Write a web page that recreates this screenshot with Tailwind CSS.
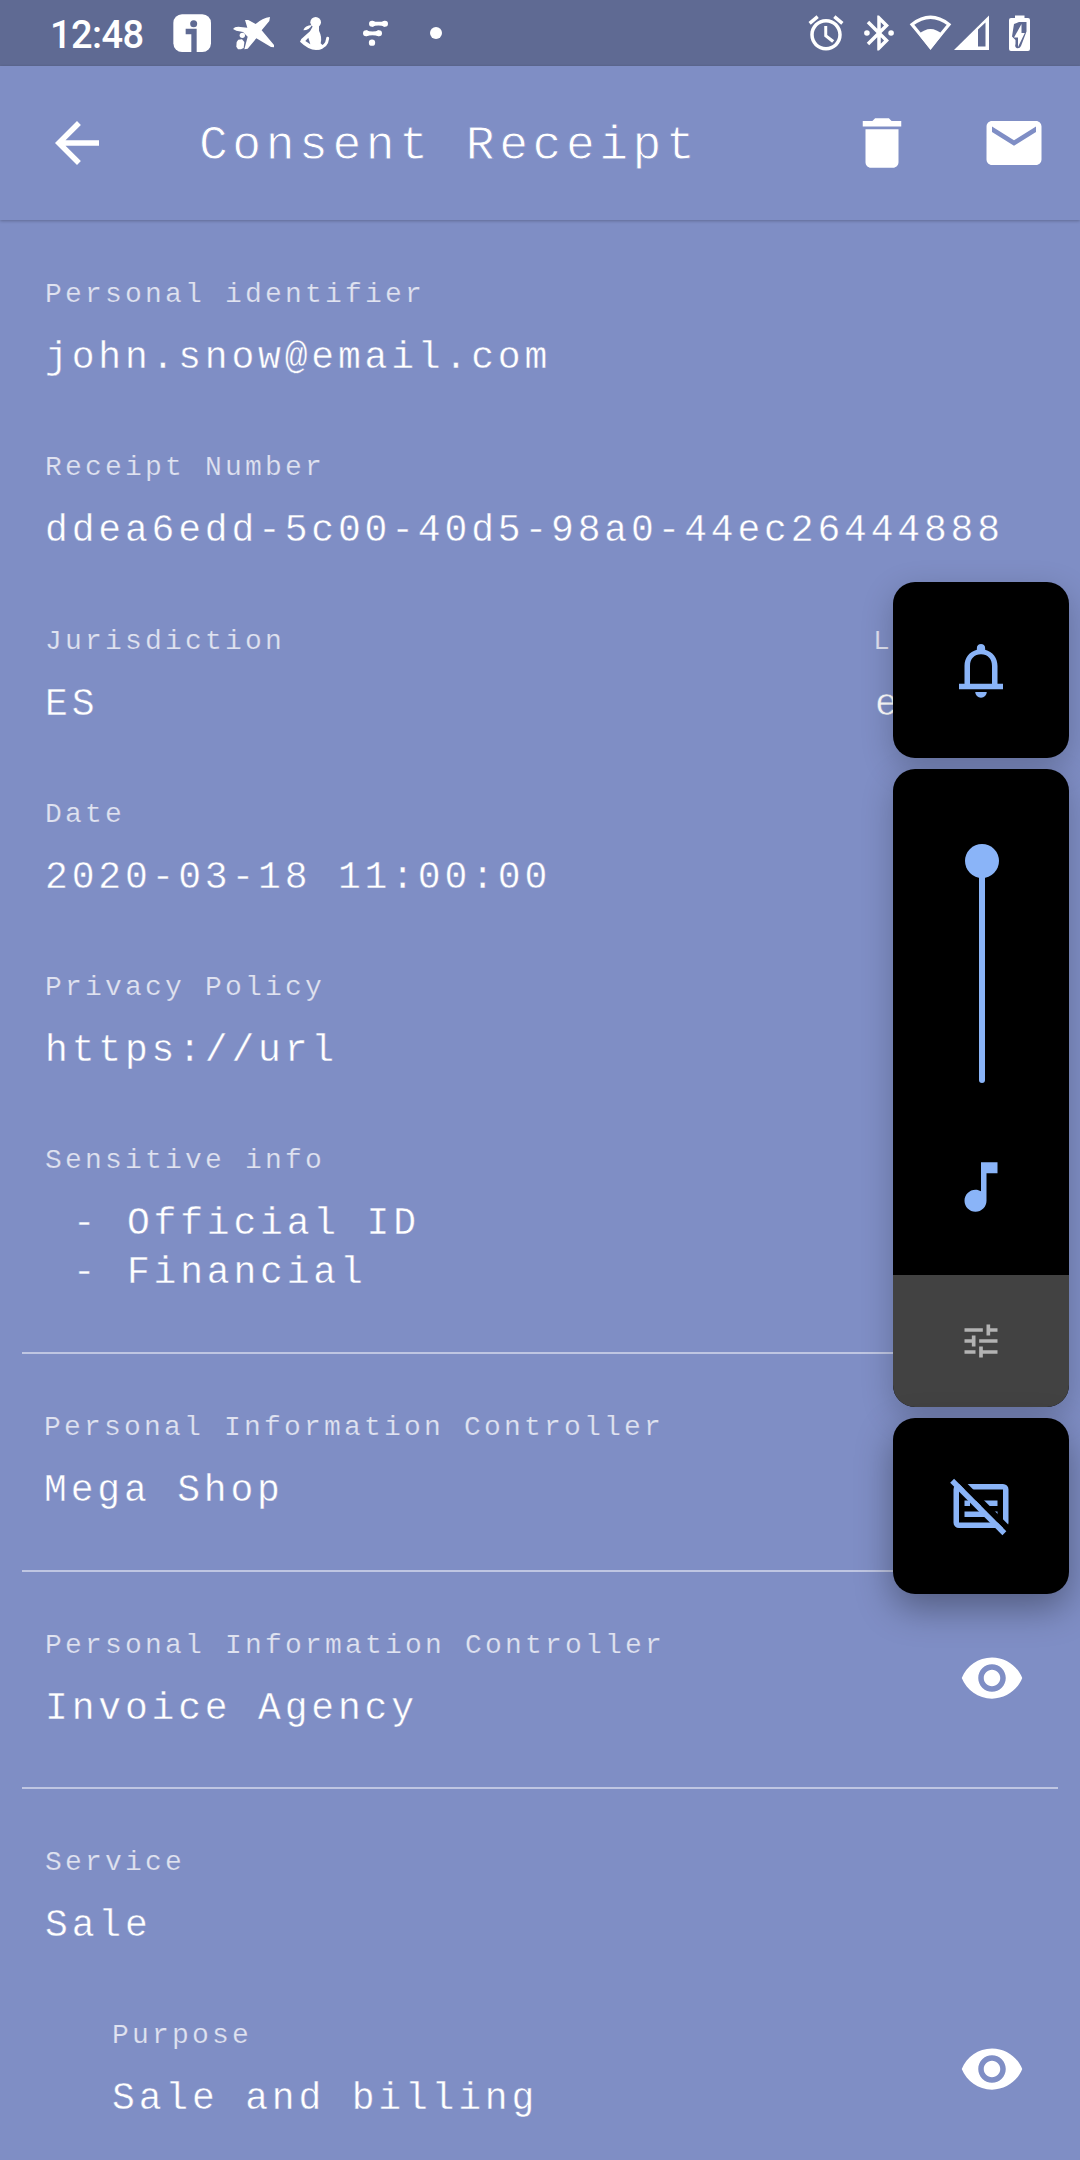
<!DOCTYPE html>
<html lang="en">
<head>
<meta charset="utf-8">
<title>Consent Receipt</title>
<script src="https://cdn.jsdelivr.net/npm/@tailwindcss/browser@4"></script>
</head>
<body class="bg-[#7f8ec5]">
<div class="relative flex h-[2160px] w-[1080px] flex-col overflow-hidden bg-[#7f8ec5] text-white [font-family:'Liberation_Mono',monospace]">

  <!-- Status bar -->
  <div class="flex h-[66px] shrink-0 items-center justify-between bg-[#5f6a93]">
    <div class="flex items-center">
      <span class="w-[172px] pl-[50px] pt-[3px] text-[38px] leading-none font-medium tracking-[-0.6px] [font-family:Roboto,sans-serif]">12:48</span>
      <svg class="h-[66px] w-[50px]" viewBox="36 0 150 198"><rect x="40" y="43" width="113" height="113" rx="26" fill="#fff"/><g fill="#5f6a93"><circle cx="101" cy="71" r="10.5"/><path d="M77 86h33v71H94v-54H77z"/></g></svg>
      <svg class="h-[66px] w-[65px]" viewBox="186 0 195 198" fill="#fff"><path d="M255 60h10l22 12q20-18 43-21l-2 12-23 28 37 44v7l-9-1-44-26-26 31-10 2 10-38-14-14-20-4-10-5 6-5 10-2 27 3z"/><circle cx="247" cy="106" r="8"/><path d="M235 119l11-1 7 8-2 18-8 4h-9l-5-8 1-14z"/></svg>
      <svg class="h-[66px] w-[60px]" viewBox="381 0 180 198"><g fill="#fff"><circle cx="467" cy="67" r="16"/><path d="M430 91q5-15 26-16-8 16-26 16z"/><path d="M459 78h18v14q10 20 5 38l8 8q0 12-22 12-22 0-48-25l4-8 26-23z"/></g><path d="M445 113l-9 10 15 10z" fill="#5f6a93"/><path d="M474 144q26-2 29-29" fill="none" stroke="#fff" stroke-width="9" stroke-linecap="round"/></svg>
      <svg class="h-[66px] w-[60px]" viewBox="561 0 180 198" fill="#fff"><circle cx="636" cy="71" r="9"/><circle cx="675" cy="71" r="9"/><path d="M636 62q20 7 39 0v18q-20-7-39 0z"/><circle cx="618" cy="100" r="9"/><circle cx="657" cy="100" r="9"/><path d="M618 91q20 7 39 0v18q-20-7-39 0z"/><circle cx="636" cy="128" r="9.5"/></svg>
      <svg class="h-[66px] w-[53px]" viewBox="741 0 159 198" fill="#fff"><circle cx="828" cy="99" r="18"/></svg>
    </div>
    <div class="flex items-center pr-[36px]">
      <svg class="mr-[11px] size-[42px]" viewBox="0 0 24 24" fill="#fff"><path d="M22 5.720l-4.600-3.860-1.290 1.530 4.600 3.860L22 5.720zM7.880 3.390L6.600 1.860 2 5.710l1.290 1.530 4.590-3.850zM12.700 8H11v6l4.500 3.600 1.200-1.400-4-3V8zM12 4c-4.970 0-9 4.030-9 9s4.020 9 9 9c4.970 0 9-4.030 9-9s-4.030-9-9-9zm0 16c-3.870 0-7-3.130-7-7s3.130-7 7-7 7 3.130 7 7-3.130 7-7 7z"/></svg>
      <svg class="mr-[6px] size-[42px]" viewBox="0 0 24 24" fill="#fff"><circle cx="5.100" cy="12" r="1.600"/><circle cx="18.900" cy="12" r="1.600"/><path d="M17.710 7.710L12 2h-1v7.590L6.410 5 5 6.410 10.590 12 5 17.590 6.410 19 11 14.410V22h1l5.710-5.710-4.300-4.290 4.300-4.290zM13 5.830l1.880 1.880L13 9.590V5.830zm1.880 10.460L13 18.170v-3.760l1.880 1.880z"/></svg>
      <svg class="h-[66px] w-[138px]" viewBox="906 0 138 66">
        <path d="M912 24.500q18.500-14.500 37 0L930.500 47z" fill="none" stroke="#fff" stroke-width="3.200"/>
        <path d="M930.500 50L918.500 34.500q12-11 24 0z" fill="#fff"/>
        <path d="M954 50L989 15.500V50z" fill="#fff"/><path d="M978 29.500l7.500-7V46.500H978z" fill="#5f6a93"/>
        <path d="M1015 15.500h9.500V18h3.500q2 0 2 2v29q0 2-2 2h-17q-2 0-2-2V20q0-2 2-2h4z" fill="#fff"/>
        <path d="M1019 22h7.500v9.500l-5.500 14.500q-1.500 3-4.500 2-2-1-1-4v-4l-3.500-3.500 2-12.500z" fill="#5f6a93"/>
        <path d="M1021.500 24l-7.500 13.500h4v9.500l6.800-14h-3.300z" fill="#fff"/>
      </svg>
    </div>
  </div>

  <!-- App bar -->
  <header class="z-10 flex h-[154px] shrink-0 items-center bg-[#7f8ec5] pr-[33px] pl-[44px] shadow-[0_1px_3px_rgba(0,0,0,0.25)]">
    <svg class="size-[66px]" viewBox="0 0 24 24" fill="#fff"><path d="M20 11H7.830l5.590-5.590L12 4l-8 8 8 8 1.410-1.410L7.830 13H20v-2z"/></svg>
    <h1 class="ml-[89px] flex-1 pt-[6px] text-[48px] leading-none tracking-[4.550px] whitespace-nowrap [-webkit-text-stroke:0.800px_#7f8ec5]">Consent Receipt</h1>
    <svg class="size-[66px]" viewBox="0 0 24 24" fill="#fff"><path d="M6 19c0 1.100.9 2 2 2h8c1.100 0 2-.9 2-2V7H6v12zM19 4h-3.500l-1-1h-5l-1 1H5v2h14V4z"/></svg>
    <svg class="ml-[66px] size-[66px]" viewBox="0 0 24 24" fill="#fff"><path d="M20 4H4c-1.100 0-1.990.9-1.990 2L2 18c0 1.100.9 2 2 2h16c1.100 0 2-.9 2-2V6c0-1.100-.9-2-2-2zm0 4l-8 5-8-5V6l8 5 8-5v2z"/></svg>
  </header>

  <!-- Receipt -->
  <main class="px-[22px] text-[38px] leading-[49px] tracking-[3.830px] [-webkit-text-stroke:0.400px_#7f8ec5]">
    <section class="border-b-2 border-[#bfc6e2] pt-[57px] pb-[55px] pl-[23px]">
      <div class="h-[173.300px]"><p class="mb-5 text-[28px] leading-[36px] tracking-[3.200px] text-white/75 [-webkit-text-stroke:0.200px_#7f8ec5]">Personal identifier</p><p>john.snow@email.com</p></div>
      <div class="h-[173.300px]"><p class="mb-5 text-[28px] leading-[36px] tracking-[3.200px] text-white/75 [-webkit-text-stroke:0.200px_#7f8ec5]">Receipt Number</p><p class="whitespace-nowrap">ddea6edd-5c00-40d5-98a0-44ec26444888</p></div>
      <div class="flex h-[173.300px]">
        <div class="w-[828px] shrink-0"><p class="mb-5 text-[28px] leading-[36px] tracking-[3.200px] text-white/75 [-webkit-text-stroke:0.200px_#7f8ec5]">Jurisdiction</p><p>ES</p></div>
        <div><p class="mb-5 text-[28px] leading-[36px] tracking-[3.200px] text-white/75 [-webkit-text-stroke:0.200px_#7f8ec5]">Language</p><p class="pl-[2px]">en</p></div>
      </div>
      <div class="h-[173.300px]"><p class="mb-5 text-[28px] leading-[36px] tracking-[3.200px] text-white/75 [-webkit-text-stroke:0.200px_#7f8ec5]">Date</p><p>2020-03-18 11:00:00</p></div>
      <div class="h-[173.300px]"><p class="mb-5 text-[28px] leading-[36px] tracking-[3.200px] text-white/75 [-webkit-text-stroke:0.200px_#7f8ec5]">Privacy Policy</p><p>https://url</p></div>
      <div><p class="mb-5 text-[28px] leading-[36px] tracking-[3.200px] text-white/75 [-webkit-text-stroke:0.200px_#7f8ec5]">Sensitive info</p><p class="pl-[1px] whitespace-pre"> - <span class="ml-[1px]">Official ID</span></p><p class="pl-[1px] whitespace-pre"> - <span class="ml-[1px]">Financial</span></p></div>
    </section>
    <section class="border-b-2 border-[#bfc6e2] pt-14 pb-[54.500px] pl-[22px]">
      <p class="mb-5 text-[28px] leading-[36px] tracking-[3.200px] text-white/75 [-webkit-text-stroke:0.200px_#7f8ec5]">Personal Information Controller</p><p>Mega Shop</p>
    </section>
    <section class="flex items-center justify-between border-b-2 border-[#bfc6e2] pt-14 pr-[33px] pb-[54.500px] pl-[23px]">
      <div><p class="mb-5 text-[28px] leading-[36px] tracking-[3.200px] text-white/75 [-webkit-text-stroke:0.200px_#7f8ec5]">Personal Information Controller</p><p>Invoice Agency</p></div>
      <svg class="-mt-5 -mb-4 size-[66px]" viewBox="0 0 24 24" fill="#fff" stroke="none"><path d="M12 4.500C7 4.500 2.730 7.610 1 12c1.730 4.390 6 7.500 11 7.500s9.270-3.110 11-7.500c-1.730-4.390-6-7.500-11-7.500zM12 17c-2.760 0-5-2.240-5-5s2.240-5 5-5 5 2.240 5 5-2.240 5-5 5zm0-8c-1.660 0-3 1.340-3 3s1.340 3 3 3 3-1.340 3-3-1.340-3-3-3z"/></svg>
    </section>
    <section class="pt-14 pl-[23px]">
      <div class="h-[173px]"><p class="mb-5 text-[28px] leading-[36px] tracking-[3.200px] text-white/75 [-webkit-text-stroke:0.200px_#7f8ec5]">Service</p><p>Sale</p></div>
      <div class="flex items-center justify-between pr-[33px] pl-[67px]">
        <div><p class="mb-5 text-[28px] leading-[36px] tracking-[3.200px] text-white/75 [-webkit-text-stroke:0.200px_#7f8ec5]">Purpose</p><p>Sale and billing</p></div>
        <svg class="mb-[3px] size-[66px]" viewBox="0 0 24 24" fill="#fff" stroke="none"><path d="M12 4.500C7 4.500 2.730 7.610 1 12c1.730 4.390 6 7.500 11 7.500s9.270-3.110 11-7.500c-1.730-4.390-6-7.500-11-7.500zM12 17c-2.760 0-5-2.240-5-5s2.240-5 5-5 5 2.240 5 5-2.240 5-5 5zm0-8c-1.660 0-3 1.340-3 3s1.340 3 3 3 3-1.340 3-3-1.340-3-3-3z"/></svg>
      </div>
    </section>
  </main>

  <!-- Volume overlay -->
  <aside class="absolute top-[582px] right-[11px] z-20 flex w-[176px] flex-col gap-[11px]">
    <div class="flex h-[176px] items-center justify-center rounded-[22px] bg-black shadow-[0_10px_32px_rgba(0,0,0,0.22)]">
      <svg class="size-[66px]" viewBox="0 0 24 24" fill="#8ab4f8"><path fill-rule="evenodd" d="M18 17v-6.500c0-2.900-1.800-5.200-4.500-5.850V4a1.500 1.500 0 0 0-3 0v.65C7.800 5.300 6 7.600 6 10.500V17H4v2h16v-2zM8 17v-6.500C8 8 9.600 6.300 12 6.300s4 1.700 4 4.200V17zM9.900 20a2.100 2.100 0 0 0 4.200 0z"/></svg>
    </div>
    <div class="flex h-[638px] flex-col overflow-hidden rounded-[22px] bg-black shadow-[0_10px_32px_rgba(0,0,0,0.22)]">
      <div class="flex flex-1 flex-col items-center pt-[75px]">
        <div class="ml-[2px] size-[34px] rounded-full bg-[#8ab4f8]"></div>
        <div class="-mt-1 ml-[2px] h-[209px] w-[6px] rounded-b-full bg-[#8ab4f8]"></div>
        <svg class="mt-[71px] size-[66px]" viewBox="0 0 24 24" fill="#8ab4f8"><path d="M12 3v10.550c-.59-.34-1.270-.55-2-.55-2.210 0-4 1.790-4 4s1.790 4 4 4 4-1.790 4-4V7h4V3h-6z"/></svg>
      </div>
      <div class="flex h-[132px] items-center justify-center bg-[#424242]">
        <svg class="size-[44px]" viewBox="0 0 24 24" fill="#b3b3b3"><path d="M3 17v2h6v-2H3zM3 5v2h10V5H3zm10 16v-2h8v-2h-8v-2h-2v6h2zM7 9v2H3v2h4v2h2V9H7zm14 4v-2H11v2h10zm-6-4h2V7h4V5h-4V3h-2v6z"/></svg>
      </div>
    </div>
    <div class="flex h-[176px] items-center justify-center rounded-[22px] bg-black shadow-[0_14px_36px_rgba(0,0,0,0.35)]">
      <svg class="size-[66px] overflow-visible" viewBox="0 0 24 24" fill="none"><rect x="3" y="5" width="18" height="14" rx="1" stroke="#8ab4f8" stroke-width="2"/><path d="M6 11h2M10 11h8M6 15h8M16 15h2" stroke="#8ab4f8" stroke-width="2"/><path d="M3.100 1.500L23.100 21.500" stroke="#000" stroke-width="2.200"/><path d="M1.500 2.800L20.500 21.900" stroke="#8ab4f8" stroke-width="2"/></svg>
    </div>
  </aside>
</div>
</body>
</html>
